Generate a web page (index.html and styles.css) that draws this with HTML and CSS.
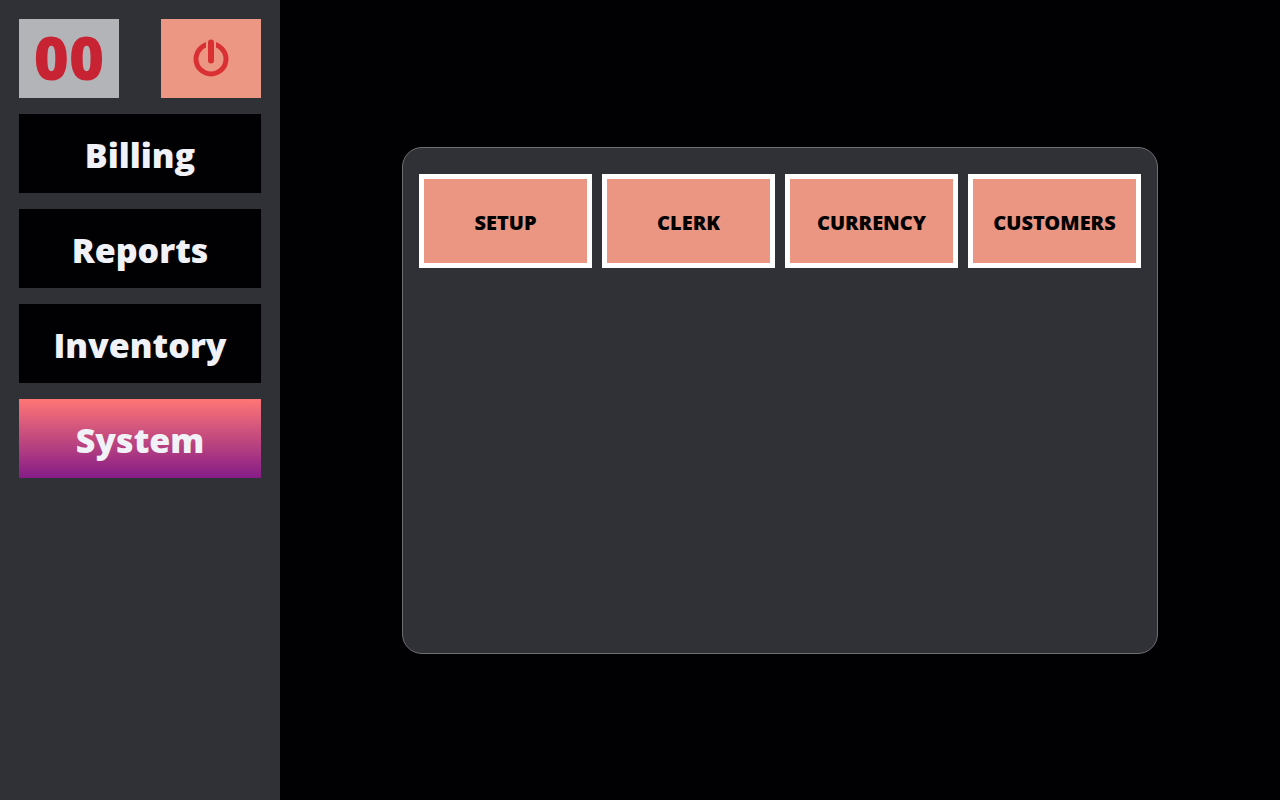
FILE: index.html
```html
<!DOCTYPE html>
<html lang="en">
<head>
<meta charset="utf-8">
<meta name="viewport" content="width=device-width, initial-scale=1">
<title>System</title>
<link rel="stylesheet" href="styles.css">
</head>
<body>
<div class="app">
  <aside class="sidebar">
    <div class="top-row">
      <div class="clerk-number">00</div>
      <button class="power" type="button" aria-label="Log out">
        <svg class="power-icon" viewBox="0 0 36 40" aria-hidden="true">
          <circle class="power-ring" cx="18" cy="22" r="15"/>
          <path class="power-gap" d="M18 0V22"/>
          <path class="power-stem" d="M18 5.5V23.5"/>
        </svg>
      </button>
    </div>
    <nav class="menu">
      <button class="menu-item" type="button">Billing</button>
      <button class="menu-item" type="button">Reports</button>
      <button class="menu-item" type="button">Inventory</button>
      <button class="menu-item active" type="button">System</button>
    </nav>
  </aside>
  <main class="content">
    <section class="panel">
      <button class="tile" type="button">SETUP</button>
      <button class="tile" type="button">CLERK</button>
      <button class="tile" type="button">CURRENCY</button>
      <button class="tile" type="button">CUSTOMERS</button>
    </section>
  </main>
</div>
</body>
</html>
```
FILE: styles.css
```css
* {
  box-sizing: border-box;
}

body {
  margin: 0;
  background: #010103;
  font-family: "Segoe UI Black", "Noto Sans", "Open Sans", sans-serif;
  font-weight: 900;
}

button {
  margin: 0;
  padding: 0;
  border: 0;
  font: inherit;
  cursor: pointer;
}

.app {
  display: flex;
  min-height: 100vh;
}

.sidebar {
  display: flex;
  flex-direction: column;
  gap: 16px;
  flex: 0 0 280px;
  padding: 19px;
  background: #303136;
}

.top-row {
  display: flex;
  justify-content: space-between;
}

.clerk-number,
.power {
  display: flex;
  align-items: center;
  justify-content: center;
  width: 100px;
  height: 79px;
}

.clerk-number {
  padding-bottom: 2px;
  background: #b3b4b8;
  color: #c82333;
  font-size: 60px;
  line-height: 75px;
}

.power {
  padding-bottom: 4px;
  background: #ec9783;
  color: #d93033;
}

.power-icon {
  width: 36px;
  height: 40px;
  fill: none;
  stroke: currentColor;
}

.power-ring {
  stroke-width: 5;
}

.power-gap {
  stroke: #ec9783;
  stroke-width: 10;
}

.power-stem {
  stroke-width: 6;
  stroke-linecap: round;
}

.menu {
  display: flex;
  flex-direction: column;
  gap: 16px;
}

.menu-item {
  height: 79px;
  padding-top: 2px;
  background: #010103;
  color: #f1f2f8;
  font-family: "Segoe UI Black", "Open Sans", sans-serif;
  font-size: 34px;
  line-height: 46px;
}

.menu-item.active {
  background: linear-gradient(#ff7676, #851c87);
}

.content {
  display: flex;
  flex: 1;
  align-items: center;
  justify-content: center;
  padding: 16px;
}

.panel {
  display: grid;
  grid-template-columns: repeat(4, 1fr);
  align-content: start;
  gap: 10px;
  width: 100%;
  max-width: 756px;
  min-height: 507px;
  padding: 26px 16px;
  border: 1px solid #6e6f73;
  border-radius: 20px;
  background: #303136;
}

.tile {
  height: 94px;
  padding-top: 4px;
  border: 5px solid #fff;
  background: #eb9682;
  color: #000;
  font-size: 20px;
  line-height: 28px;
}
```
